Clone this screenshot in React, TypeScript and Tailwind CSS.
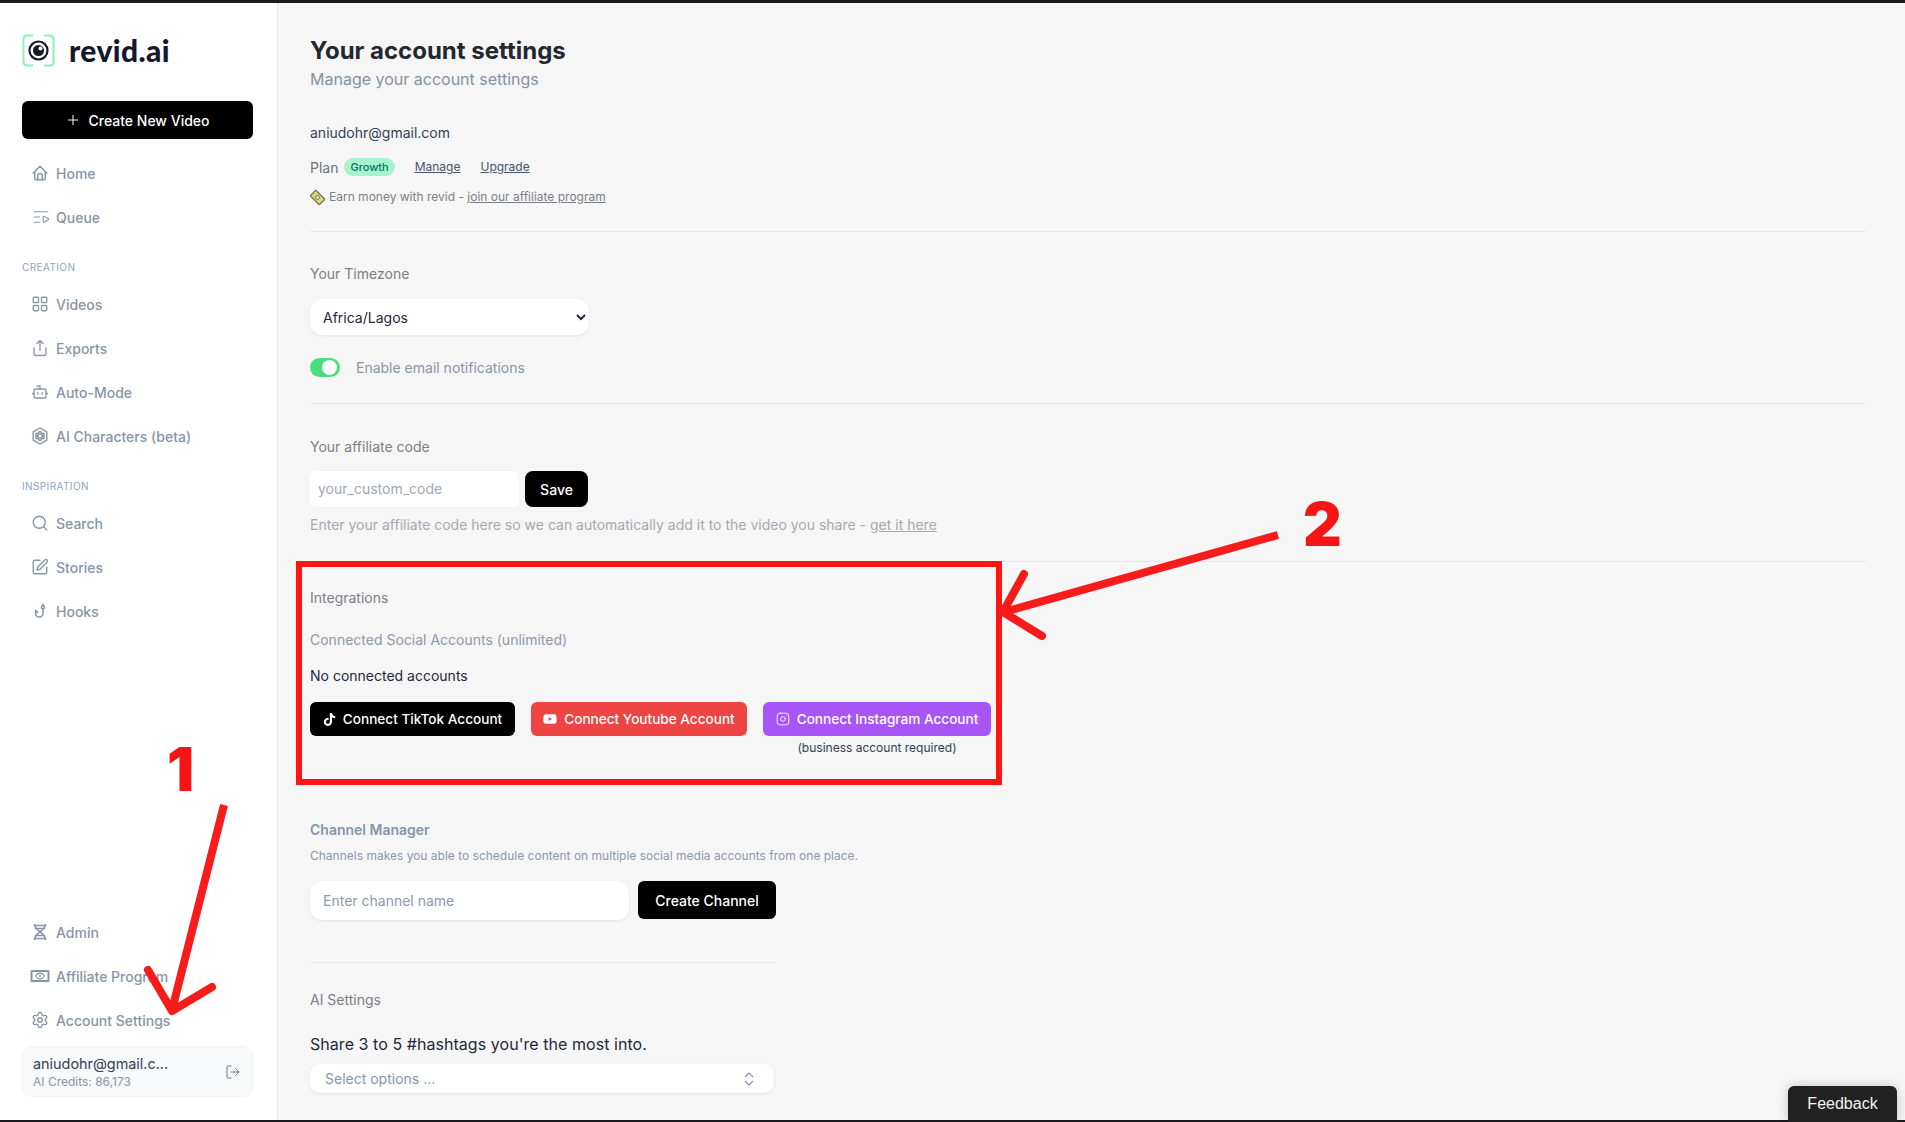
import React from 'react';
import { Plus, ListVideo, LayoutGrid, Share, Bot, Search, SquarePen, Settings, LogOut, ChevronsUpDown, Instagram } from 'lucide-react';
import { TbHome, TbFishHook } from 'react-icons/tb';
import { FaTiktok, FaYoutube } from 'react-icons/fa';

type NavEntry = { label: string; icon: React.ReactNode };

const iconCls = 'w-[18px] h-[18px] shrink-0';

function CharacterIcon() {
  return (
    <svg className={iconCls} viewBox="0 0 18 18" fill="none" stroke="currentColor" strokeWidth="1.4" strokeLinejoin="round">
      <path d="M9 1l6.800 3.900v8.200L9 17l-6.800-3.900V4.900z" />
      <circle cx="9" cy="5.800" r="1.300" />
      <circle cx="9" cy="12.200" r="1.300" />
      <circle cx="6" cy="7.500" r="1.300" />
      <circle cx="12" cy="7.500" r="1.300" />
      <circle cx="6" cy="10.500" r="1.300" />
      <circle cx="12" cy="10.500" r="1.300" />
    </svg>
  );
}

function DnaIcon() {
  return (
    <svg className={iconCls} viewBox="0 0 18 18" fill="none" stroke="currentColor" strokeWidth="1.600" strokeLinecap="round">
      <path d="M3.500 1.500c0 6 11 8.500 11 15M14.500 1.500c0 6-11 8.500-11 15" />
      <path d="M3.500 2.500h11M4.500 5.500h9M4.500 12.500h9M3.500 15.500h11" />
    </svg>
  );
}

function CashIcon() {
  return (
    <svg className="w-[20px] h-[18px] shrink-0 -ml-px -mr-px" viewBox="0 0 20 18" fill="none" stroke="currentColor" strokeWidth="2">
      <rect x="1.500" y="4" width="17" height="10" rx="0.500" />
      <path d="M5.500 9c1.500-2 3-2.800 4.500-2.800S13 7 14.500 9c-1.500 2-3 2.800-4.500 2.800S7 11 5.500 9z" strokeWidth="1.200" />
      <circle cx="10" cy="9" r="1" fill="currentColor" stroke="none" />
    </svg>
  );
}

const mainNav: NavEntry[] = [
  { label: 'Home', icon: <TbHome className={iconCls} /> },
  { label: 'Queue', icon: <ListVideo className="w-[20px] h-[18px] shrink-0 -mr-[2px]" strokeWidth={1.5} /> },
];

const creationNav: NavEntry[] = [
  { label: 'Videos', icon: <LayoutGrid className={iconCls} strokeWidth={1.8} /> },
  { label: 'Exports', icon: <Share className={iconCls} strokeWidth={1.8} /> },
  { label: 'Auto-Mode', icon: <Bot className={iconCls} strokeWidth={1.8} /> },
  { label: 'AI Characters (beta)', icon: <CharacterIcon /> },
];

const inspirationNav: NavEntry[] = [
  { label: 'Search', icon: <Search className={iconCls} strokeWidth={1.8} /> },
  { label: 'Stories', icon: <SquarePen className={iconCls} strokeWidth={1.8} /> },
  { label: 'Hooks', icon: <TbFishHook className={iconCls} /> },
];

const bottomNav: NavEntry[] = [
  { label: 'Admin', icon: <DnaIcon /> },
  { label: 'Affiliate Program', icon: <CashIcon /> },
  { label: 'Account Settings', icon: <Settings className={iconCls} strokeWidth={1.8} /> },
];

function NavList({ items }: { items: NavEntry[] }) {
  return (
    <div className="flex flex-col gap-[16px]">
      {items.map(item => (
        <div key={item.label} className="flex items-center gap-[7px] h-[28px] pl-[9px] text-[14px] font-medium text-[#8795a8]">
          {item.icon}
          <span>{item.label}</span>
        </div>
      ))}
    </div>
  );
}

function Logo() {
  return (
    <div className="flex items-center gap-[14px]">
      <svg width="33" height="33" viewBox="0 0 33 33" fill="none">
        <path d="M11 1.500H5a3.500 3.500 0 0 0-3.500 3.500v23A3.500 3.500 0 0 0 5 31.500h6M22 1.500h6A3.500 3.500 0 0 1 31.500 5v23a3.500 3.500 0 0 1-3.500 3.500h-6" stroke="#8df0b8" strokeWidth="2" />
        <circle cx="16.500" cy="16.500" r="9" stroke="#14182b" strokeWidth="2.200" />
        <circle cx="16.500" cy="16.500" r="5.500" fill="#14182b" />
        <circle cx="18.500" cy="14.500" r="2" fill="#fff" />
      </svg>
      <span className="text-[30px] leading-none font-black tracking-[0.4px] text-[#14182b] font-['Lato',sans-serif] -mt-[2px]">revid.ai</span>
    </div>
  );
}

function Sidebar() {
  return (
    <aside className="w-[278px] shrink-0 h-full bg-white border-r border-[#e8e8e8] pl-[22px] pr-[24px] flex flex-col">
      <div className="pt-[31px]">
        <Logo />
      </div>
      <button className="mt-[34px] h-[38px] w-full shrink-0 bg-black text-white rounded-[6px] flex items-center justify-center gap-[7px] text-[14px] font-medium">
        <Plus className="w-[16px] h-[16px]" strokeWidth={1.5} />
        Create New Video
      </button>
      <div className="mt-[20px]">
        <NavList items={mainNav} />
      </div>
      <p className="mt-[30px] mb-[17px] text-[10px] leading-[12px] tracking-[0.4px] text-[#8fa3bd]">CREATION</p>
      <NavList items={creationNav} />
      <p className="mt-[30px] mb-[17px] text-[10px] leading-[12px] tracking-[0.4px] text-[#8fa3bd]">INSPIRATION</p>
      <NavList items={inspirationNav} />
      <div className="mt-auto">
        <NavList items={bottomNav} />
      </div>
      <div className="mt-[12px] mb-[23px] h-[51px] rounded-[10px] bg-[#f8f9fb] border border-[#f1f3f6] flex items-center justify-between pl-[10px] pr-[11px]">
        <div>
          <p className="text-[14.400px] leading-[17px] text-[#334155]">aniudohr@gmail.c...</p>
          <p className="text-[12px] leading-[15px] mt-[2px] text-[#8795a8]">AI Credits: 86,173</p>
        </div>
        <LogOut className="w-[16px] h-[16px] text-[#64748b]" strokeWidth={1.5} />
      </div>
    </aside>
  );
}

function ConnectButton({ className, icon, label }: { className: string; icon: React.ReactNode; label: string }) {
  return (
    <button className={`h-[34px] rounded-[6px] flex items-center justify-center gap-[7px] text-white text-[13.600px] font-medium ${className}`}>
      {icon}
      {label}
    </button>
  );
}

function MoneyIcon() {
  return (
    <svg className="w-[15px] h-[15px] mr-[4px] shrink-0" viewBox="0 0 15 15" fill="none">
      <g transform="rotate(45 7.500 7.500)">
        <rect x="1" y="3.500" width="13" height="8" rx="1" fill="#d9d77a" stroke="#55603a" strokeWidth="1" />
        <circle cx="7.500" cy="7.500" r="2" fill="#f3efc0" stroke="#55603a" strokeWidth="0.800" />
      </g>
    </svg>
  );
}

function SettingsPage() {
  return (
    <main className="flex-1 min-w-0 h-full overflow-hidden pl-[32px] pr-[39px] pt-[33px]">
      <h1 className="text-[24px] leading-[30px] font-bold text-[#23272f]">Your account settings</h1>
      <p className="text-[16px] leading-[24px] text-[#8492a6] mt-[1px]">Manage your account settings</p>

      <p className="mt-[32px] text-[14px] leading-[20px] text-[#334155]">aniudohr@gmail.com</p>
      <div className="mt-[14px] h-[20px] flex items-center text-[12px]">
        <span className="text-[14px] text-[#6b7280]">Plan</span>
        <span className="ml-[6px] h-[18px] px-[6px] rounded-full bg-[#a7f3d0] text-[#047857] text-[11px] font-medium leading-[16px] flex items-center">Growth</span>
        <a className="ml-[20px] underline text-[#475569]">Manage</a>
        <a className="ml-[20px] underline text-[#475569]">Upgrade</a>
      </div>
      <p className="mt-[10px] text-[12px] leading-[20px] text-[#7b8087] flex items-center">
        <MoneyIcon />
        Earn money with revid -&nbsp;<a className="underline">join our affiliate program</a>
      </p>

      <hr className="mt-[24px] border-[#e5e5e5]" />

      <p className="mt-[32px] text-[14px] leading-[20px] text-[#7b8087]">Your Timezone</p>
      <select defaultValue="Africa/Lagos" className="mt-[15px] block w-[279px] h-[36px] rounded-[12px] bg-white pl-[9px] pr-[5px] text-[14px] text-[#1e293b] shadow-[0_1px_3px_rgba(0,0,0,0.08)] outline-none">
        <option>Africa/Lagos</option>
      </select>
      <div className="mt-[22px] flex items-center h-[20px]">
        <div className="w-[30px] h-[19px] rounded-full bg-[#4ade80] flex items-center justify-end pr-[3px]">
          <div className="w-[15px] h-[15px] rounded-full bg-white" />
        </div>
        <span className="ml-[16px] text-[14px] text-[#8795a8]">Enable email notifications</span>
      </div>

      <hr className="mt-[26px] border-[#e5e5e5]" />

      <p className="mt-[33px] text-[14px] leading-[20px] text-[#7b8087]">Your affiliate code</p>
      <div className="mt-[14px] flex items-center gap-[6px]">
        <input readOnly placeholder="your_custom_code" className="w-[209px] h-[36px] rounded-[6px] bg-white px-[8px] pb-[2px] text-[14px] placeholder:text-[#a0a7b2] outline-none" />
        <button className="w-[63px] h-[36px] rounded-[8px] bg-black text-white text-[14px] font-medium">Save</button>
      </div>
      <p className="mt-[8px] text-[14px] leading-[20px] text-[#a4a9b1]">
        Enter your affiliate code here so we can automatically add it to the video you share - <a className="underline">get it here</a>
      </p>

      <hr className="mt-[26px] border-[#e5e5e5]" />

      <p className="mt-[26px] text-[14px] leading-[20px] text-[#7b8087]">Integrations</p>
      <p className="mt-[22px] text-[14px] leading-[20px] text-[#8c99ab]">Connected Social Accounts (unlimited)</p>
      <p className="mt-[16px] text-[14px] leading-[20px] text-[#1e293b]">No connected accounts</p>
      <div className="mt-[16px] flex items-start gap-[16px]">
        <ConnectButton className="w-[205px] bg-black" icon={<FaTiktok className="w-[13px] h-[13px]" />} label="Connect TikTok Account" />
        <ConnectButton className="w-[216px] bg-[#ef4444]" icon={<FaYoutube className="w-[14px] h-[14px]" />} label="Connect Youtube Account" />
        <div className="w-[228px]">
          <ConnectButton className="w-full bg-[#a855f7]" icon={<Instagram className="w-[14px] h-[14px]" strokeWidth={1.5} />} label="Connect Instagram Account" />
          <p className="mt-[4px] text-center text-[12px] leading-[16px] text-[#334155]">(business account required)</p>
        </div>
      </div>

      <div className="mt-[64px] w-[466px]">
        <h2 className="text-[14px] leading-[20px] font-semibold text-[#8795a8]">Channel Manager</h2>
        <p className="mt-[8px] text-[12px] leading-[16px] text-[#8c99ab] whitespace-nowrap">Channels makes you able to schedule content on multiple social media accounts from one place.</p>
        <div className="mt-[17px] flex items-start gap-[9px]">
          <input readOnly placeholder="Enter channel name" className="w-[319px] h-[39px] rounded-[12px] bg-white px-[13px] text-[14px] placeholder:text-[#8c99ab] shadow-[0_1px_3px_rgba(0,0,0,0.08)] outline-none" />
          <button className="w-[138px] h-[38px] rounded-[6px] bg-black text-white text-[14px] font-medium">Create Channel</button>
        </div>
        <hr className="mt-[42px] border-[#e5e5e5]" />
        <p className="mt-[27px] text-[14px] leading-[20px] text-[#7b8087]">AI Settings</p>
        <p className="mt-[22px] text-[16px] leading-[24px] tracking-[0.05px] text-[#1e293b] whitespace-nowrap">Share 3 to 5 #hashtags you're the most into.</p>
        <div className="mt-[8px] h-[29px] w-[464px] rounded-[10px] bg-white shadow-[0_1px_3px_rgba(0,0,0,0.08)] flex items-center justify-between pl-[15px] pr-[16px]">
          <span className="text-[14px] text-[#8795a8]">Select options ...</span>
          <ChevronsUpDown className="w-[18px] h-[18px] text-[#8795a8]" strokeWidth={1.5} />
        </div>
      </div>
    </main>
  );
}

// red markup drawn over the screenshot
function Annotations() {
  return (
    <>
      <div className="absolute left-[296px] top-[561px] w-[706px] h-[224px] border-[6px] border-[#ff1515]" />
      <svg className="absolute inset-0 w-full h-full pointer-events-none" viewBox="0 0 1905 1122" fill="none">
        <g stroke="#f71b1b" strokeWidth="8">
          <path d="M224 805L172 1010" />
          <path d="M148 970L172 1011L212 987" strokeLinecap="round" strokeLinejoin="round" />
          <path d="M1278 535L1004 612" />
          <path d="M1024 574L1003 612L1042 636" strokeLinecap="round" strokeLinejoin="round" />
        </g>
      </svg>
      <span className="absolute left-[167px] top-[733px] text-[60px] leading-[72px] font-black text-[#f71414] font-['Inter',sans-serif]">1</span>
      <span className="absolute left-[1303px] top-[488px] text-[60px] leading-[72px] font-black text-[#f71414] font-['Inter',sans-serif]">2</span>
    </>
  );
}

export default function App() {
  return (
    <div className="relative w-full h-screen overflow-hidden bg-[#f6f6f6] font-['Inter',sans-serif] flex flex-col">
      <div className="h-[3px] shrink-0 bg-[#1a1a1f]" />
      <div className="flex-1 min-h-0 flex">
        <Sidebar />
        <SettingsPage />
      </div>
      <div className="h-[2px] shrink-0 bg-[#1a1a1f]" />
      <Annotations />
      <div className="absolute right-[8px] bottom-0 w-[109px] h-[36px] bg-[#212121] rounded-t-[6px] flex items-center justify-center text-[16px] text-[#f2f2f2] font-['Liberation_Sans',sans-serif] shadow-[0_0_12px_rgba(0,0,0,0.2)]">
        Feedback
      </div>
    </div>
  );
}
